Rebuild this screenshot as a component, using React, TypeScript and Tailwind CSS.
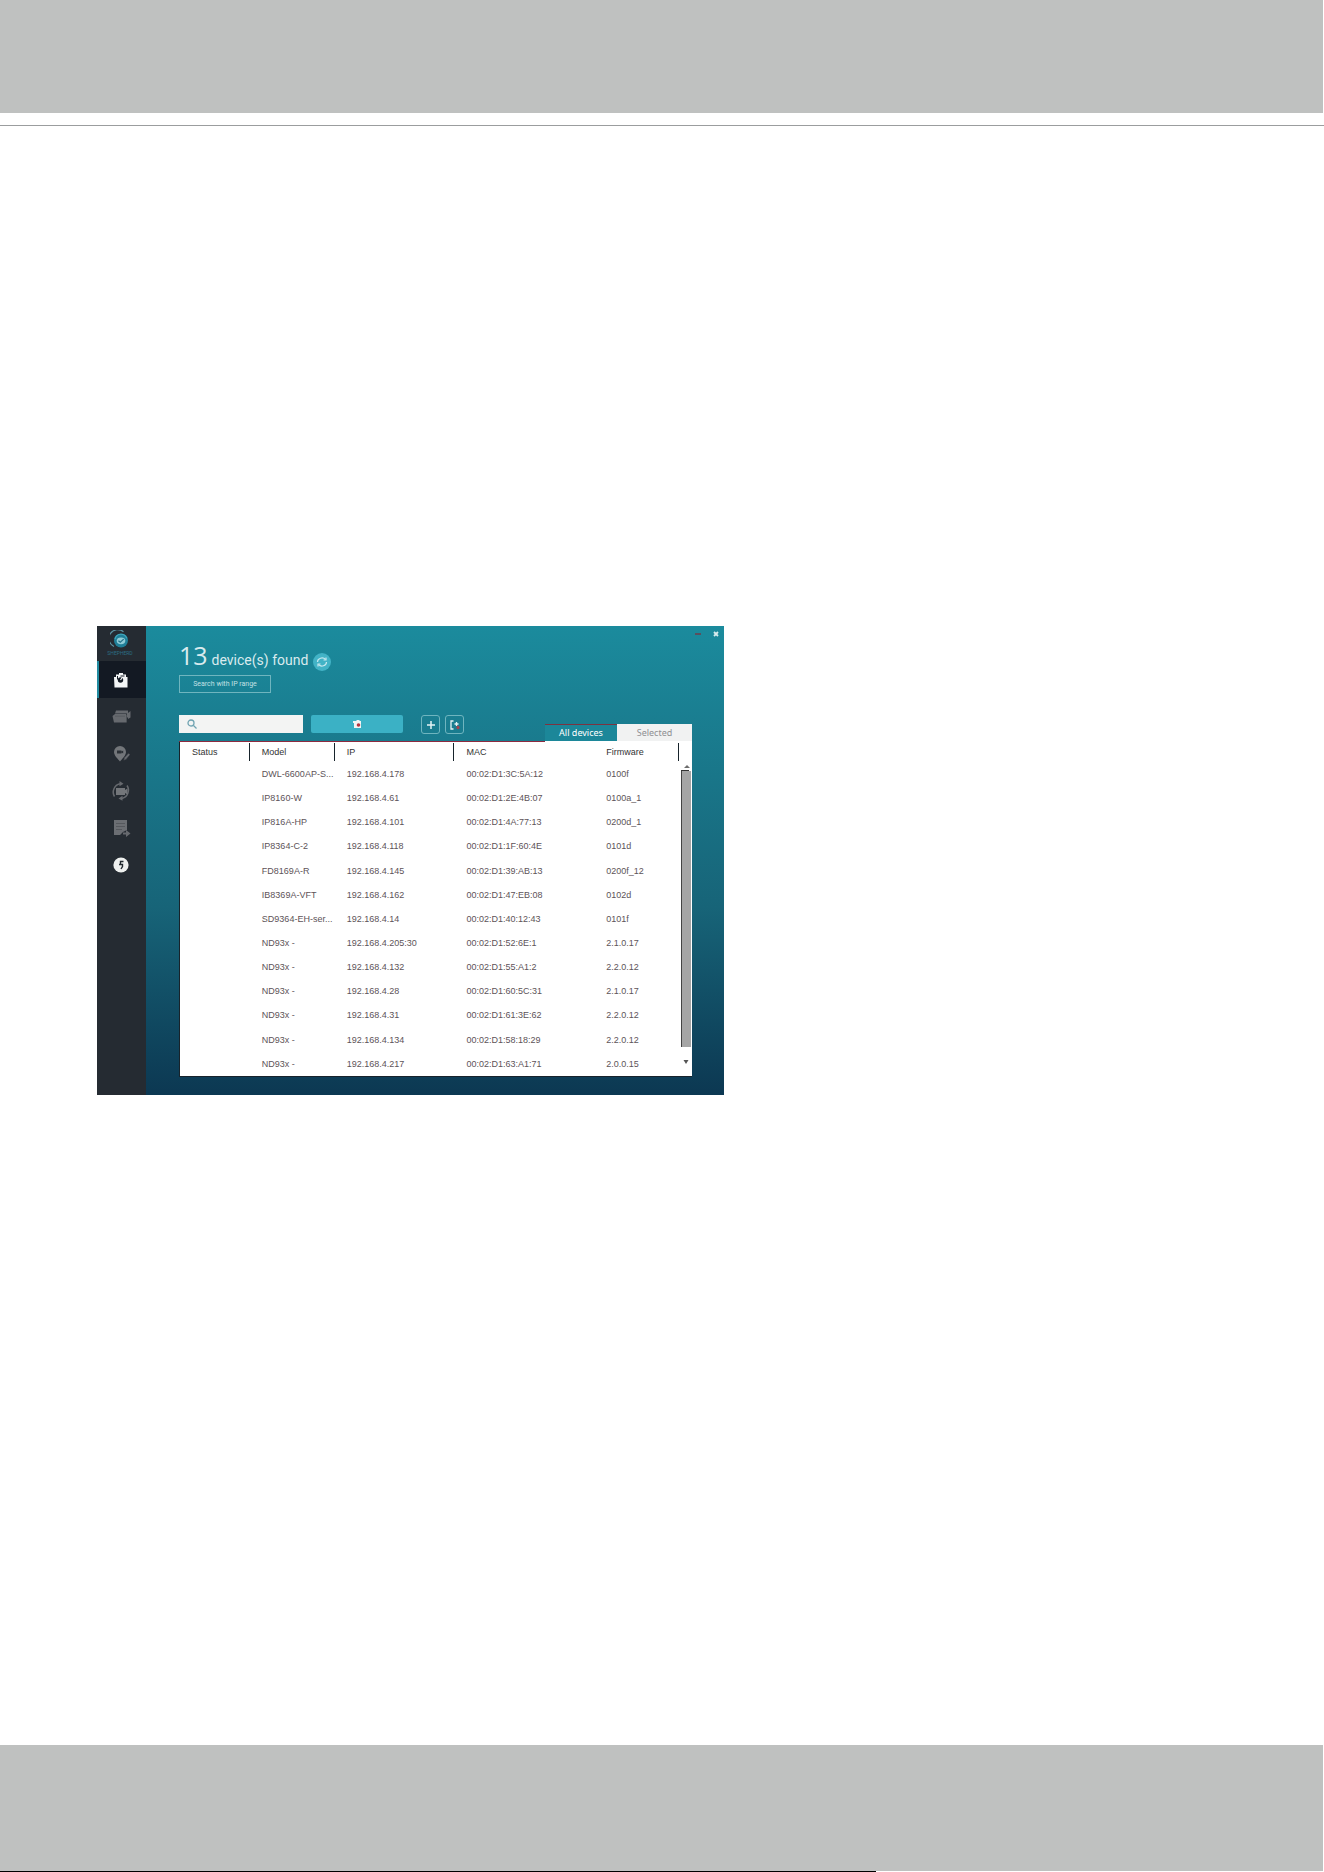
import React from "react";

type Device = { model: string; ip: string; mac: string; firmware: string };

const devices: Device[] = [
  { model: "DWL-6600AP-S...", ip: "192.168.4.178", mac: "00:02:D1:3C:5A:12", firmware: "0100f" },
  { model: "IP8160-W", ip: "192.168.4.61", mac: "00:02:D1:2E:4B:07", firmware: "0100a_1" },
  { model: "IP816A-HP", ip: "192.168.4.101", mac: "00:02:D1:4A:77:13", firmware: "0200d_1" },
  { model: "IP8364-C-2", ip: "192.168.4.118", mac: "00:02:D1:1F:60:4E", firmware: "0101d" },
  { model: "FD8169A-R", ip: "192.168.4.145", mac: "00:02:D1:39:AB:13", firmware: "0200f_12" },
  { model: "IB8369A-VFT", ip: "192.168.4.162", mac: "00:02:D1:47:EB:08", firmware: "0102d" },
  { model: "SD9364-EH-ser...", ip: "192.168.4.14", mac: "00:02:D1:40:12:43", firmware: "0101f" },
  { model: "ND93x -", ip: "192.168.4.205:30", mac: "00:02:D1:52:6E:1", firmware: "2.1.0.17" },
  { model: "ND93x -", ip: "192.168.4.132", mac: "00:02:D1:55:A1:2", firmware: "2.2.0.12" },
  { model: "ND93x -", ip: "192.168.4.28", mac: "00:02:D1:60:5C:31", firmware: "2.1.0.17" },
  { model: "ND93x -", ip: "192.168.4.31", mac: "00:02:D1:61:3E:62", firmware: "2.2.0.12" },
  { model: "ND93x -", ip: "192.168.4.134", mac: "00:02:D1:58:18:29", firmware: "2.2.0.12" },
  { model: "ND93x -", ip: "192.168.4.217", mac: "00:02:D1:63:A1:71", firmware: "2.0.0.15" },
];

const columns = [
  { name: "Status", width: "w-[14%]", line: true },
  { name: "Model", width: "w-[17%]", line: true },
  { name: "IP", width: "w-[24%]", line: true },
  { name: "MAC", width: "w-[28%]", line: false },
  { name: "Firmware", width: "w-[17%]", line: true },
];

function Logo() {
  return (
    <svg viewBox="0 0 20 20" className="size-5" aria-hidden="true">
      <path d="M13.500 1.800A8.800 8.800 0 1 0 4 16.400" fill="none" stroke="#5c93a3" strokeWidth="1.100" />
      <circle cx="11" cy="10.500" r="7" fill="#207f98" />
      <path d="M5 9A6.200 6.200 0 0 1 16.800 8.200" fill="none" stroke="#41a8bd" strokeWidth="1.200" />
      <ellipse cx="11" cy="10.800" rx="4.300" ry="3.400" fill="#8fcbd6" />
      <path d="m8.400 10.700 1.900 1.600 3.400-3.200" fill="none" stroke="#23728a" strokeWidth="1.200" />
    </svg>
  );
}

function CameraSearchIcon() {
  return (
    <svg viewBox="0 0 18 18" className="size-[18px]" aria-hidden="true">
      <path d="M2 6h2V3.500h3V2h4v1.500h3V6h1.500v10.500h-13z" fill="#f4f6f7" />
      <circle cx="8.500" cy="9" r="2.700" fill="#141b25" />
      <path d="M8.500 9 11 5.500" stroke="#f4f6f7" strokeWidth="1.200" />
      <path d="M5.500 5v3.500M12.500 5h-4" stroke="#141b25" strokeWidth="1" />
    </svg>
  );
}

function CamerasIcon() {
  return (
    <svg viewBox="0 0 20 18" className="h-[18px] w-5" fill="#66696e" aria-hidden="true">
      <path d="M5 2.500h12V9l-1 1V5.500H4z" />
      <path d="m17 5 2.500-2v6.500L17 11z" />
      <path d="M1.500 8 4 6h11l.6 1v7.500H3z" />
      <path d="M4 8.200h10" stroke="#54585d" strokeWidth=".8" />
    </svg>
  );
}

function PinEditIcon() {
  return (
    <svg viewBox="0 0 20 20" className="size-5" aria-hidden="true">
      <path d="M9 2a6 6 0 0 0-6 6c0 3.500 4 7 6 9.500C11 15 15 11.500 15 8a6 6 0 0 0-6-6z" fill="#73767a" />
      <path d="M6 6.500h4.500v3H6zM10.500 7.500l1.700-1v3l-1.700-1z" fill="#2b3036" />
      <path d="m12.500 16.500.8-3L17.500 9l1.700 1.700-4.200 5z" fill="#66696e" stroke="#252a31" strokeWidth=".6" />
    </svg>
  );
}

function CameraSyncIcon() {
  return (
    <svg viewBox="0 0 22 20" className="h-5 w-[22px]" aria-hidden="true">
      <path
        d="M4.500 15.500A8.500 8.500 0 0 1 10 2.800M17 4.500a8.500 8.500 0 0 1-5 13"
        fill="none"
        stroke="#66696e"
        strokeWidth="1.500"
      />
      <path d="m9.500 0 4 2.700-4 2.600zM12.500 14.800v5l-4-2.300z" fill="#66696e" />
      <path d="M6 7h9v7H6zM15 9l2.500-1.500v6L15 12z" fill="#73767a" />
    </svg>
  );
}

function ReportIcon() {
  return (
    <svg viewBox="0 0 20 20" className="size-5" aria-hidden="true">
      <path d="M3 2h13v10l-4 2-3 3H3z" fill="#6b6e73" />
      <path d="M5 5.500h9M5 8.500h9M5 11.500h6" stroke="#4f5358" strokeWidth=".8" />
      <path d="M12 14.500h3V12l4.500 3.600L15 19v-2.500h-3z" fill="#66696e" />
    </svg>
  );
}

function SupportIcon() {
  return (
    <svg viewBox="0 0 18 18" className="size-[18px]" aria-hidden="true">
      <circle cx="9" cy="9" r="7.600" fill="#eef0ef" />
      <path d="M11.500 5.500h-3v3h2v2l-1.500 2.500M7 8.500h3" fill="none" stroke="#232a30" strokeWidth="1.400" />
    </svg>
  );
}

const tools = [
  { name: "Device search", icon: <CameraSearchIcon /> },
  { name: "Device maintenance", icon: <CamerasIcon /> },
  { name: "Device settings", icon: <PinEditIcon /> },
  { name: "Firmware upgrade", icon: <CameraSyncIcon /> },
  { name: "Reports", icon: <ReportIcon /> },
  { name: "Support", icon: <SupportIcon /> },
];

function Sidebar() {
  return (
    <nav aria-label="Tools" className="flex w-[49px] shrink-0 flex-col bg-[#252b32]">
      <div className="flex h-[35px] flex-col items-center pt-1 pr-[3px] text-[5px] leading-[6px] text-[#2c6d84]">
        <Logo />
        <span>SHEPHERD</span>
      </div>
      {tools.map((tool, i) => (
        <button
          key={tool.name}
          type="button"
          aria-label={tool.name}
          className={
            i === 0
              ? "flex h-[37px] items-center justify-center border-l-2 border-[#228ba0] bg-[#131923] pr-[3px]"
              : "flex h-[37px] items-center justify-center pr-[1px]"
          }
        >
          {tool.icon}
        </button>
      ))}
    </nav>
  );
}

function DeviceTable() {
  return (
    <div className="flex border-b border-l border-[#17232b] bg-white">
      <div className="min-w-0 flex-1">
        <table className="h-[334px] w-full table-fixed border-collapse text-left font-['Liberation_Sans'] text-[9px] leading-[12px] text-[#5d5358]">
          <thead>
            <tr className="h-5">
              {columns.map((column) => (
                <th key={column.name} className={`${column.width} p-0 font-normal text-[#333]`}>
                  <span
                    className={
                      column.line
                        ? "flex h-[18px] items-center border-r border-[#17232b] pl-3"
                        : "flex h-[18px] items-center pl-3"
                    }
                  >
                    {column.name}
                  </span>
                </th>
              ))}
            </tr>
          </thead>
          <tbody>
            {devices.map((device, i) => (
              <tr key={i}>
                <td className="p-0" />
                <td className="p-0 pl-3 whitespace-nowrap">{device.model}</td>
                <td className="p-0 pl-3 whitespace-nowrap">{device.ip}</td>
                <td className="p-0 pl-3 whitespace-nowrap">{device.mac}</td>
                <td className="p-0 pl-3 whitespace-nowrap">{device.firmware}</td>
              </tr>
            ))}
          </tbody>
        </table>
      </div>
      <div className="flex w-[13px] shrink-0 flex-col pt-5 pl-[2px]">
        <svg viewBox="0 0 11 9" className="h-[9px] w-[11px]" aria-hidden="true">
          <path d="m3 6 3-3 3 3z" fill="#6d6d6d" />
          <path d="M0 8.500h8" stroke="#333" />
        </svg>
        <div className="w-[10px] flex-1 border-l border-[#444] bg-[#a5a5a5]" />
        <svg viewBox="0 0 11 29" className="h-[29px] w-[11px]" aria-hidden="true">
          <path d="M2.500 13h5L5 17z" fill="#555" />
        </svg>
      </div>
    </div>
  );
}

export default function App() {
  return (
    <div className="flex min-h-screen flex-col bg-white">
      <header className="mr-px h-[113px] bg-[#bfc1c0]" />
      <div className="mt-3 h-px bg-[#9b9d9e]" />

      <main className="flex-1 pt-[500px] pl-[97px]">
        <div className="flex w-full max-w-[627px] font-['Roboto']">
          <Sidebar />
          <section className="flex min-w-0 flex-1 flex-col bg-linear-to-b from-[#1b8b9d] via-[#176478] via-60% to-[#0c3852] pb-[18px]">
            <div className="flex h-4 items-center justify-end gap-3 pr-[5px]">
              <button type="button" aria-label="Minimize">
                <svg viewBox="0 0 6 6" className="size-[6px]">
                  <path d="M0 3h6" stroke="#713c4a" strokeWidth="1.500" />
                </svg>
              </button>
              <button type="button" aria-label="Close">
                <svg viewBox="0 0 6 6" className="size-[6px]">
                  <path d="m1 1 4 4M5 1 1 5" stroke="#d9ecee" strokeWidth="1.800" />
                </svg>
              </button>
            </div>

            <div className="flex flex-col pr-8 pl-[33px]">
              <div className="flex h-[33px] items-end gap-[5px] pb-[4px] text-[#d9ebee]">
                <h1 className="flex items-baseline gap-[4px]">
                  <span className="font-['Open_Sans'] text-[25px] leading-8">13</span>
                  <span className="text-[14px] leading-5">device(s) found</span>
                </h1>
                <button
                  type="button"
                  aria-label="Refresh"
                  className="flex size-[18px] items-center justify-center rounded-full bg-[#42b3c6]"
                >
                  <svg viewBox="0 0 14 14" className="size-[14px]" fill="none" stroke="#c6e8ee" strokeWidth="1.200">
                    <path d="M2.500 7a4.500 4 0 0 1 8-2.500M11.500 7a4.500 4 0 0 1-8 2.500" />
                    <path d="M11 2.500v2.500H8.500M3 11.500V9h2.500" />
                  </svg>
                </button>
              </div>

              <button
                type="button"
                className="h-[18px] w-[92px] self-start border border-[#6fb5bf] text-[7px] leading-[16px] text-[#c3e0e4]"
              >
                Search with IP range
              </button>

              <div className="mt-[22px] flex items-start">
                <label className="flex h-[18px] w-[124px] items-center gap-1 bg-[#f3f4f3] px-[7px]">
                  <svg viewBox="0 0 12 12" className="size-3 shrink-0" fill="none" stroke="#6fa3b1" strokeWidth="1.300" aria-hidden="true">
                    <circle cx="5" cy="5" r="3" />
                    <path d="m7.500 7.500 3 3" />
                  </svg>
                  <input type="search" aria-label="Search devices" className="w-full min-w-0 bg-transparent text-[8px] outline-none" />
                </label>
                <button
                  type="button"
                  aria-label="Add device"
                  className="ml-2 flex h-[18px] w-[92px] items-center justify-center rounded-[2px] bg-[#3bb1c5]"
                >
                  <svg viewBox="0 0 10 10" className="size-[10px]" aria-hidden="true">
                    <path d="M1 2h3l1-1h2l1 1h1v7H2V4H1z" fill="#f1f5f5" />
                    <circle cx="6.500" cy="6" r="1.800" fill="#b7353f" />
                  </svg>
                </button>
                <button
                  type="button"
                  aria-label="Add"
                  className="ml-[18px] flex size-[19px] items-center justify-center rounded-[3px] border border-[#6fb5bf]"
                >
                  <svg viewBox="0 0 10 10" className="size-[10px]" stroke="#e5f3f5" strokeWidth="1.500">
                    <path d="M5 1v8M1 5h8" />
                  </svg>
                </button>
                <button
                  type="button"
                  aria-label="Import list"
                  className="ml-[5px] flex size-[19px] items-center justify-center rounded-[3px] border border-[#6fb5bf]"
                >
                  <svg viewBox="0 0 10 10" className="size-[10px]" fill="none" stroke="#e5f3f5" strokeWidth="1.300">
                    <path d="M3.500 1H1v8h2.500" />
                    <path d="M4.500 4h4M6.500 2v4" />
                    <circle cx="8" cy="7.500" r="1" fill="#a34450" stroke="#a34450" />
                  </svg>
                </button>
                <div role="tablist" className="mt-[9px] ml-auto flex h-[17px] font-['Noto_Sans'] text-[9px] leading-[16px]">
                  <button
                    role="tab"
                    aria-selected="true"
                    type="button"
                    className="w-[72px] border-t border-[#7d3340] bg-[#1c8799] text-white"
                  >
                    All devices
                  </button>
                  <button
                    role="tab"
                    aria-selected="false"
                    type="button"
                    className="w-[75px] bg-[#f1f2f2] text-[#8f9092]"
                  >
                    Selected
                  </button>
                </div>
              </div>

              <div className="bg-white">
                <div className="mr-[147px] h-px bg-[#8d2b3f]" />
              </div>
              <DeviceTable />
            </div>
          </section>
        </div>
      </main>

      <footer className="mr-px h-[126px] bg-[#bfc1c0]" />
      <div className="h-px w-[876px] max-w-full bg-black" />
    </div>
  );
}
